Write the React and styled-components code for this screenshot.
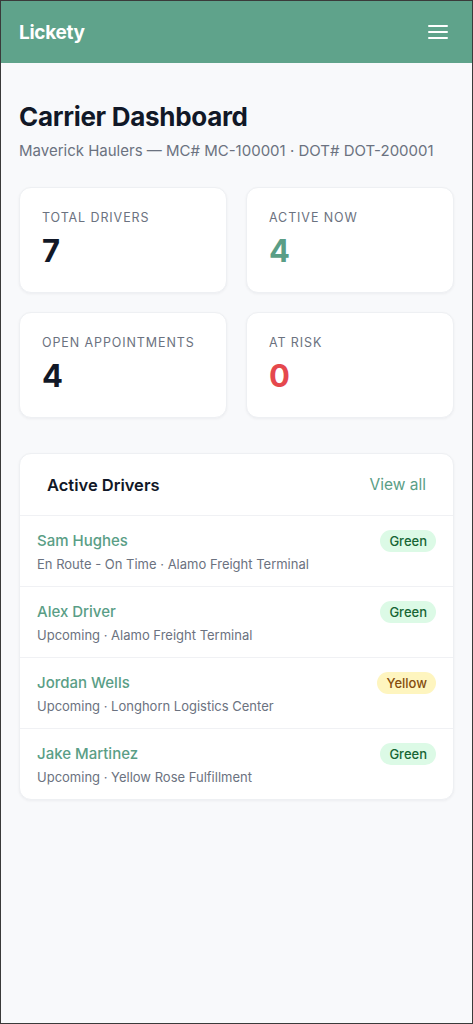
import React from 'react';
import styled, { createGlobalStyle } from 'styled-components';

const GlobalStyle = createGlobalStyle`
  * { box-sizing: border-box; }
  body {
    margin: 0;
    font-family: Inter, "Noto Sans", sans-serif;
    background: #f8f9fb;
    -webkit-font-smoothing: antialiased;
  }
`;

const Frame = styled.div`
  min-height: 100vh;
  border: 1px solid #3a3a3a;
  background: #f8f9fb;
`;

const TopBar = styled.header`
  height: 62px;
  background: #5fa38b;
  display: flex;
  align-items: center;
  justify-content: space-between;
  padding: 0 18px;
`;

const Logo = styled.div`
  color: #fff;
  font-size: 19px;
  font-weight: 700;
  letter-spacing: -0.3px;
`;

const MenuButton = styled.button`
  background: none;
  border: none;
  padding: 0;
  display: flex;
  color: #fff;
  margin-right: 6px;
`;

const Main = styled.main`
  padding: 38px 18px 40px;
`;

const Title = styled.h1`
  margin: 0;
  font-size: 26px;
  font-weight: 700;
  color: #111827;
  line-height: 32px;
  letter-spacing: -0.3px;
`;

const Subtitle = styled.p`
  margin: 6px 0 0;
  font-size: 15px;
  color: #6b7280;
  line-height: 24px;
`;

const StatGrid = styled.div`
  margin-top: 24px;
  display: grid;
  grid-template-columns: 1fr 1fr;
  gap: 19px;
`;

const StatCard = styled.div`
  background: #fff;
  border-radius: 12px;
  border: 1px solid #eef0f3;
  box-shadow: 0 1px 3px rgba(16, 24, 40, 0.05);
  height: 106px;
  padding: 22px 22px;
`;

const StatLabel = styled.div`
  font-size: 12.5px;
  letter-spacing: 0.9px;
  text-transform: uppercase;
  color: #6b7280;
  line-height: 16px;
`;

const StatValue = styled.div`
  margin-top: 6px;
  font-size: 31px;
  font-weight: 700;
  line-height: 38px;
  color: ${(p) => p.$color || '#111827'};
`;

const Panel = styled.section`
  margin-top: 35px;
  background: #fff;
  border-radius: 12px;
  border: 1px solid #eef0f3;
  box-shadow: 0 1px 3px rgba(16, 24, 40, 0.05);
  overflow: hidden;
`;

const PanelHead = styled.div`
  height: 62px;
  display: flex;
  align-items: center;
  justify-content: space-between;
  padding: 0 27px;
  border-bottom: 1px solid #f0f1f4;
`;

const PanelTitle = styled.h2`
  margin: 0;
  font-size: 16.5px;
  font-weight: 600;
  color: #111827;
`;

const ViewAll = styled.a`
  font-size: 15.5px;
  color: #5a9e86;
  text-decoration: none;
`;

const DriverRow = styled.div`
  height: 71px;
  padding: 14px 17px 0;
  display: flex;
  justify-content: space-between;
  align-items: flex-start;
  border-bottom: 1px solid #f0f1f4;
  &:last-child { border-bottom: none; height: 70px; }
`;

const DriverName = styled.div`
  font-size: 15px;
  font-weight: 500;
  color: #5a9e86;
  line-height: 22px;
`;

const DriverMeta = styled.div`
  margin-top: 3px;
  font-size: 13px;
  color: #6b7280;
  line-height: 18px;
`;

const Badge = styled.span`
  margin-top: 0;
  padding: 3px 9px;
  border-radius: 999px;
  font-size: 13px;
  font-weight: 500;
  line-height: 16px;
  background: ${(p) => (p.$tone === 'yellow' ? '#fef5bf' : '#dcfae6')};
  color: ${(p) => (p.$tone === 'yellow' ? '#854d0e' : '#166534')};
`;

const stats = [
  { label: 'Total Drivers', value: '7' },
  { label: 'Active Now', value: '4', color: '#5a9e86' },
  { label: 'Open Appointments', value: '4' },
  { label: 'At Risk', value: '0', color: '#e5484d' },
];

const drivers = [
  { name: 'Sam Hughes', meta: 'En Route - On Time · Alamo Freight Terminal', status: 'Green' },
  { name: 'Alex Driver', meta: 'Upcoming · Alamo Freight Terminal', status: 'Green' },
  { name: 'Jordan Wells', meta: 'Upcoming · Longhorn Logistics Center', status: 'Yellow' },
  { name: 'Jake Martinez', meta: 'Upcoming · Yellow Rose Fulfillment', status: 'Green' },
];

const App = () => {
  return (
    <Frame>
      <GlobalStyle />
      <TopBar>
        <Logo>Lickety</Logo>
        <MenuButton aria-label="Menu">
          <svg width="20" height="16" viewBox="0 0 20 16" fill="none" stroke="currentColor" strokeWidth="2" strokeLinecap="round">
            <path d="M1 2h18M1 8h18M1 14h18" />
          </svg>
        </MenuButton>
      </TopBar>
      <Main>
        <Title>Carrier Dashboard</Title>
        <Subtitle>Maverick Haulers — MC# MC-100001 · DOT# DOT-200001</Subtitle>
        <StatGrid>
          {stats.map((s) => (
            <StatCard key={s.label}>
              <StatLabel>{s.label}</StatLabel>
              <StatValue $color={s.color}>{s.value}</StatValue>
            </StatCard>
          ))}
        </StatGrid>
        <Panel>
          <PanelHead>
            <PanelTitle>Active Drivers</PanelTitle>
            <ViewAll href="#">View all</ViewAll>
          </PanelHead>
          {drivers.map((d) => (
            <DriverRow key={d.name}>
              <div>
                <DriverName>{d.name}</DriverName>
                <DriverMeta>{d.meta}</DriverMeta>
              </div>
              <Badge $tone={d.status.toLowerCase()}>{d.status}</Badge>
            </DriverRow>
          ))}
        </Panel>
      </Main>
    </Frame>
  );
};

export default App;
